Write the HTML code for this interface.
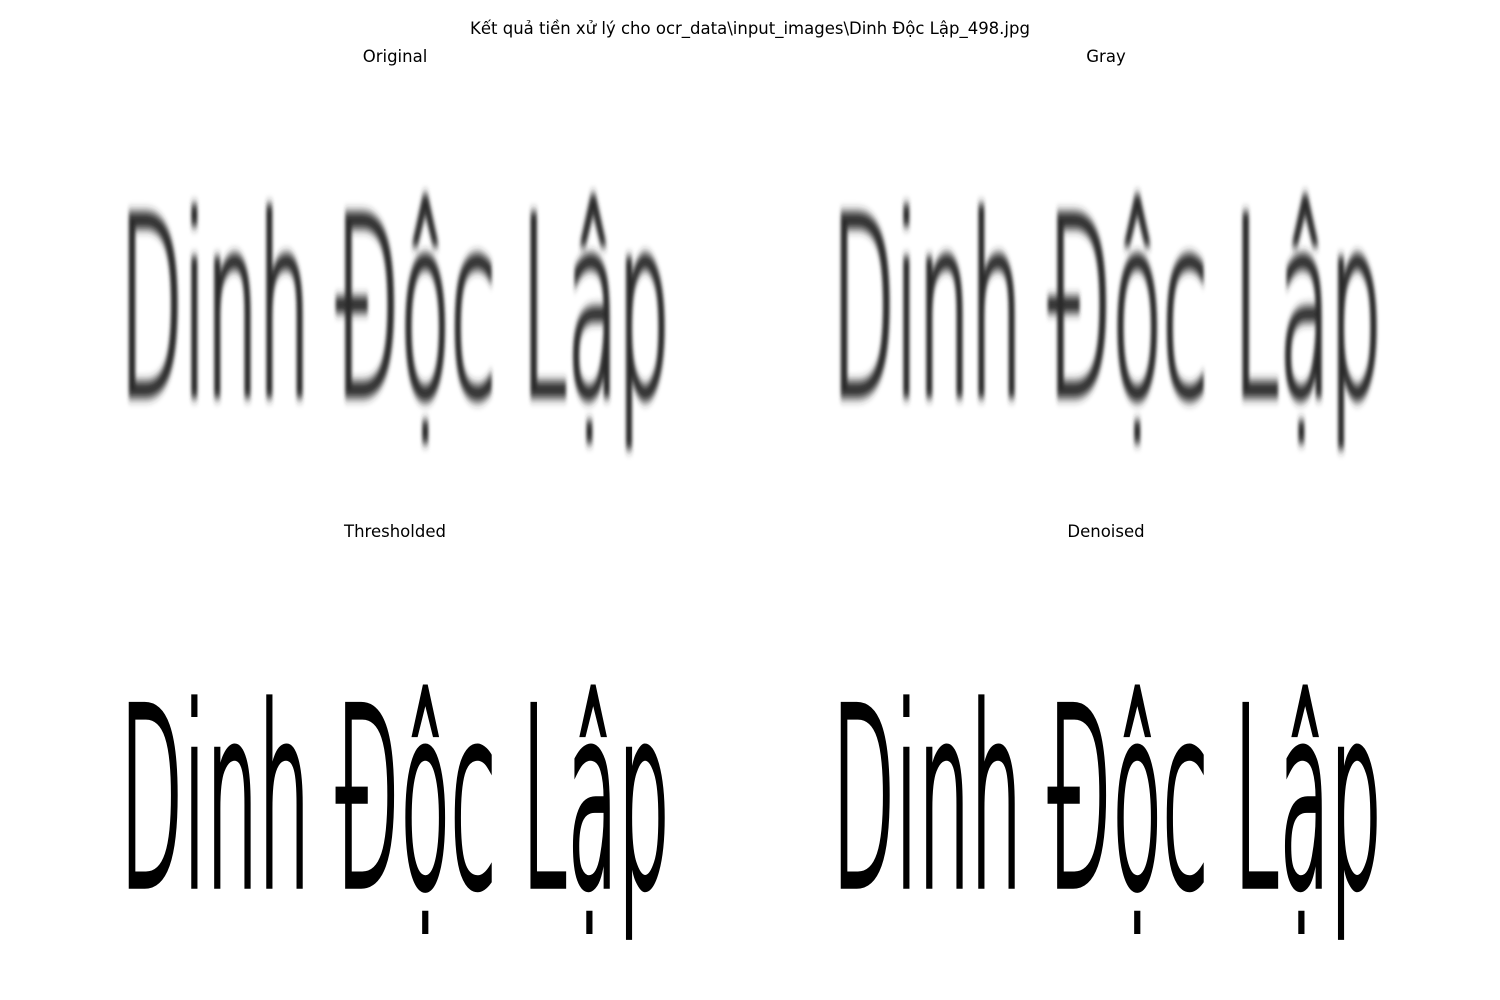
<!DOCTYPE html>
<html><head><meta charset="utf-8"><style>
body{margin:0;width:1500px;height:1000px;background:#fff;overflow:hidden;position:relative;font-family:"DejaVu Sans","Liberation Sans",sans-serif;}
.t{position:absolute;font-size:16.5px;color:#000;transform:translateX(-50%);white-space:nowrap;}
svg{position:absolute;left:0;top:0}
</style></head><body>
<div class="t" style="left:750px;top:19px">Kết quả tiền xử lý cho ocr_data\input_images\Dinh Độc Lập_498.jpg</div>
<div class="t" style="left:395px;top:47px">Original</div>
<div class="t" style="left:1106px;top:47px">Gray</div>
<div class="t" style="left:395px;top:522px">Thresholded</div>
<div class="t" style="left:1106px;top:522px">Denoised</div>
<svg width="1500" height="1000">
<defs><filter id="b"><feGaussianBlur stdDeviation="1.6"/></filter></defs>
<g font-family="DejaVu Sans, sans-serif" font-size="82" font-weight="200" stroke-width="2.5">
<g transform="scale(1,3)"><text x="120" y="131.5" fill="#2a2a2a" stroke="#2a2a2a" filter="url(#b)" textLength="550" lengthAdjust="spacingAndGlyphs">Dinh Độc Lập</text></g>
<g transform="translate(712,0) scale(1,3)"><text x="120" y="131.5" fill="#2a2a2a" stroke="#2a2a2a" filter="url(#b)" textLength="550" lengthAdjust="spacingAndGlyphs">Dinh Độc Lập</text></g>
<g transform="scale(1,3)"><text x="120" y="295" fill="#000" stroke="#000" textLength="550" lengthAdjust="spacingAndGlyphs">Dinh Độc Lập</text></g>
<g transform="translate(712,0) scale(1,3)"><text x="120" y="295" fill="#000" stroke="#000" textLength="550" lengthAdjust="spacingAndGlyphs">Dinh Độc Lập</text></g>
</g>
</svg>
</body></html>
